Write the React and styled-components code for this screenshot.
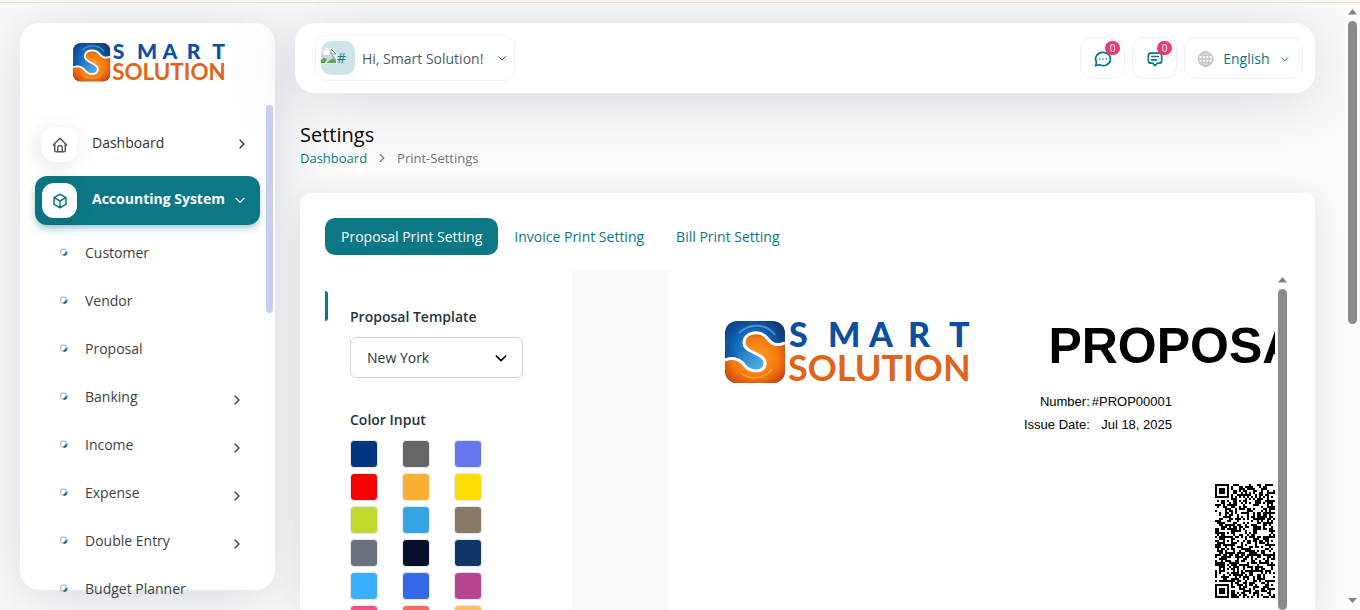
import React, { useState } from "react";
import styled, { createGlobalStyle, css } from "styled-components";

const teal = "#0c7785";
const barShadow = "0 6px 60px rgba(150, 154, 175, 0.36)";
const cardShadow = "0 6px 30px rgba(170, 180, 195, 0.36)";

const GlobalStyle = createGlobalStyle`
  *, *::before, *::after { box-sizing: border-box; }
  body {
    margin: 0;
    background: #fbfbfc;
    color: #293240;
    font: 14px/20px "Open Sans", "Noto Sans", sans-serif;
  }
  button, select, input { font: inherit; color: inherit; margin: 0; }
  a { color: inherit; text-decoration: none; }
`;

const Page = styled.div`
  display: flex;
  flex-direction: column;
  height: 100vh;
  overflow: hidden;
`;

const Notice = styled.div`
  flex: none;
  height: 3px;
  background: #fffaf0;
  border-bottom: 1px solid #f0dfc4;
`;

const Shell = styled.div`
  flex: 1;
  min-height: 0;
  display: flex;
`;

const Sidebar = styled.aside`
  flex: none;
  display: flex;
  flex-direction: column;
  width: 255px;
  margin: 20px 0 20px 20px;
  border-radius: 20px;
  background: #fff;
  box-shadow: ${barShadow};
`;

const Brand = styled.a`
  flex: none;
  display: flex;
  justify-content: center;
  padding: 20px 0 23px 4px;
`;

const LogoSvg = styled.svg`
  display: block;
  flex: none;
  align-self: flex-start;
  overflow: visible;
  width: ${(p) => p.$width}px;
  aspect-ratio: 246 / 62;
`;

const MenuScroll = styled.div`
  flex: 1;
  min-height: 0;
  display: flex;
  justify-content: space-between;
  padding: 0 2px 0 15px;
`;

const Thumb = styled.div`
  flex: none;
  width: ${(p) => (p.$menu ? 7 : 9)}px;
  height: ${(p) => p.$height || "auto"};
  border-radius: 5px;
  background: ${(p) => (p.$menu ? "#c8cfef" : "#8b8b8b")};
  ${(p) => p.$grow && css`flex: 1;`}
`;

const Menu = styled.ul`
  list-style: none;
  width: 225px;
  margin: 0;
  padding: 15px 0 0;
`;

const MenuLink = styled.a`
  display: flex;
  align-items: center;
  height: 49px;
  margin-bottom: ${(p) => (p.$active ? 4 : 7)}px;
  padding: 0 ${(p) => (p.$active ? 13 : 10)}px 0 7px;
  border-radius: 12px;
  color: ${(p) => (p.$active ? "#fff" : "#333")};
  font-weight: ${(p) => (p.$active ? 700 : 500)};
  ${(p) =>
    p.$active &&
    css`
      background: ${teal};
      box-shadow: 0 4px 7px -1px rgba(12, 119, 133, 0.4);
    `}
`;

const IconTile = styled.span`
  display: grid;
  place-items: center;
  width: 35px;
  height: 35px;
  padding-top: 2px;
  margin-right: 15px;
  border-radius: 12px;
  background: #fff;
  color: ${(p) => (p.$active ? teal : "#525b69")};
  box-shadow: -3px 4px 23px rgba(0, 0, 0, 0.1);
`;

const MenuText = styled.span`
  flex: 1;
  white-space: nowrap;
  padding-bottom: 3px;
`;

const SubLink = styled.a`
  display: flex;
  align-items: center;
  gap: 17px;
  height: 48px;
  padding: 0 15px 0 24px;
  color: #3c3f43;

  svg:last-child:not(:first-child) { position: relative; top: 3px; }
`;

const SubText = styled.span`
  flex: 1;
  white-space: nowrap;
`;

const Main = styled.main`
  flex: 1;
  min-width: 0;
  display: flex;
  flex-direction: column;
  padding: 20px 30px 0 20px;
`;

const TopBar = styled.header`
  flex: none;
  display: flex;
  align-items: center;
  gap: 7px;
  height: 70px;
  padding: 0 12px 0 20px;
  border-radius: 20px;
  background: #fff;
  box-shadow: ${barShadow};
`;

const BarButton = styled.button`
  position: relative;
  display: flex;
  align-items: center;
  justify-content: center;
  height: 42px;
  width: 45px;
  padding: 2px 0 0;
  border: 1px solid #f1f1f1;
  border-radius: 12px;
  background: #fff;
  color: ${teal};
  white-space: nowrap;
  ${(p) =>
    p.$user &&
    css`
      width: 200px;
      height: 46px;
      margin-right: auto;
      padding: 0 6px 0 5px;
      gap: 7px;
      color: #525b69;
    `}
  ${(p) =>
    p.$language &&
    css`
      width: 119px;
      gap: 9px;
      padding: 2px 12px 0;
    `}
`;

const BarText = styled.span`
  flex: 1;
  text-align: left;
  padding-top: ${(p) => (p.$user ? 2 : 0)}px;
`;

const Avatar = styled.span`
  display: flex;
  width: 34px;
  height: 34px;
  padding-top: 7px;
  border-radius: 10px;
  background: #cfe4e7;
  color: ${teal};
`;

const Badge = styled.span`
  position: absolute;
  top: 3px;
  right: 4px;
  width: 15px;
  height: 14px;
  border-radius: 7px;
  background: #f0386b;
  color: #fff;
  font-size: 10px;
  line-height: 14px;
`;

const Heading = styled.div`
  flex: none;
  padding: 30px 5px 0;
`;

const Title = styled.h1`
  margin: 0 0 1px;
  color: #060606;
  font-size: 20px;
  line-height: 24px;
  font-weight: 500;
`;

const Crumbs = styled.nav`
  display: flex;
  align-items: center;
  gap: 8px;
  font-size: 13px;
  color: #6c757d;

  a { color: ${teal}; }
`;

const Card = styled.section`
  flex: 1;
  min-height: 0;
  display: flex;
  flex-direction: column;
  margin: 25px 0 0 5px;
  padding: 25px 25px 0;
  border-radius: 10px 10px 0 0;
  background: #fff;
  box-shadow: ${cardShadow};
`;

const Tabs = styled.div`
  flex: none;
  display: flex;
`;

const Tab = styled.button`
  height: 37px;
  padding: 0 16px;
  border: 0;
  border-radius: 10px;
  background: ${(p) => (p.$active ? teal : "transparent")};
  color: ${(p) => (p.$active ? "#fff" : teal)};
`;

const Panel = styled.div`
  flex: 1;
  min-height: 0;
  display: flex;
  margin-top: 16px;
`;

const Form = styled.form`
  flex: none;
  width: 247px;
  padding-top: 20px;
  display: flex;
  gap: 22px;
`;

const Accent = styled.div`
  width: 3px;
  height: 30px;
  border-radius: 0 3px 3px 0;
  background: ${teal};
`;

const Fields = styled.div`
  width: 173px;
  padding-top: 16px;
`;

const Label = styled.label`
  display: block;
  margin-bottom: 10px;
  font-weight: 600;
`;

const SelectBox = styled.div`
  display: grid;
  align-items: center;
  margin-bottom: 32px;

  > * { grid-area: 1 / 1; }
  svg { justify-self: end; margin-right: 14px; pointer-events: none; color: #000; }
`;

const Select = styled.select`
  appearance: none;
  width: 100%;
  height: 41px;
  padding: 0 16px;
  border: 1px solid #ced4da;
  border-radius: 6px;
  background: #fff;
`;

const Swatches = styled.fieldset`
  display: grid;
  grid-template-columns: repeat(3, 28px);
  gap: 5px 24px;
  margin: 0;
  padding: 0;
  border: 0;

  legend { padding: 0 0 10px; font-weight: 600; }
`;

const Swatch = styled.input`
  appearance: none;
  width: 28px;
  height: 28px;
  border: 1px solid #e3e7ee;
  border-radius: 4px;
  background: ${(p) => p.$color};
`;

const Preview = styled.div`
  flex: 1;
  min-width: 0;
  display: flex;
  background: #f8f9fb;
`;

const Viewport = styled.div`
  flex: 1;
  min-width: 0;
  overflow: hidden;
  padding-left: 97px;
`;

const Sheet = styled.article`
  display: flex;
  justify-content: space-between;
  width: 716px;
  min-height: 100%;
  padding: 50px 56px;
  background: #fff;
  color: #000;
  font: 13px/23px "Liberation Sans", Arial, sans-serif;
`;

const Summary = styled.div`
  flex: none;
  display: flex;
  flex-direction: column;
  width: 305px;
`;

const DocTitle = styled.h2`
  margin: 0 0 18px;
  align-self: flex-end;
  font-size: 50px;
  line-height: 51px;
`;

const Meta = styled.table`
  align-self: flex-start;
  border-collapse: collapse;
  margin-bottom: 48px;
  text-align: right;

  th { padding: 0; font-weight: 400; }
  td { padding: 0 0 0 2px; }
`;

const Qr = styled.svg`
  align-self: flex-end;
  width: 114px;
  height: 114px;
`;

const ScrollTrack = styled.div`
  flex: none;
  display: flex;
  flex-direction: column;
  align-items: center;
  gap: 6px;
  width: 15px;
  padding: ${(p) => (p.$page ? "6px 0" : "6px 0 0")};
  background: ${(p) => (p.$page ? "#fcfcfc" : "#fff")};

  svg:last-child:not(:first-child) { margin-top: auto; }
`;

const Stroke = ({ size = 18, width = 2, children }) => (
  <svg width={size} height={size} viewBox="0 0 24 24" fill="none" stroke="currentColor"
    strokeWidth={width} strokeLinecap="round" strokeLinejoin="round" aria-hidden="true">
    {children}
  </svg>
);

const ChevronRight = ({ size = 16 }) => <Stroke size={size}><path d="M9 18l6-6-6-6" /></Stroke>;
const ChevronDown = ({ size = 14, width }) => <Stroke size={size} width={width}><path d="M5 9l7 7 7-7" /></Stroke>;

const HomeIcon = () => (
  <Stroke>
    <path d="M5 12H3l9-9 9 9h-2" />
    <path d="M5 12v7a2 2 0 0 0 2 2h10a2 2 0 0 0 2-2v-7" />
    <path d="M9 21v-6a2 2 0 0 1 2-2h2a2 2 0 0 1 2 2v6" />
  </Stroke>
);

const BoxIcon = () => (
  <Stroke>
    <path d="M12 3l8 4.500v9L12 21l-8-4.500v-9L12 3M12 12l8-4.500M12 12v9M12 12L4 7.500" />
  </Stroke>
);

const ChatIcon = () => (
  <Stroke size={20}>
    <path d="M3 20l1.300-3.900a9 8 0 1 1 3.400 2.900L3 20M12 12v.01M8 12v.01M16 12v.01" />
  </Stroke>
);

const MessageIcon = () => (
  <Stroke size={20}>
    <path d="M12 20l-3-3H7a3 3 0 0 1-3-3V8a3 3 0 0 1 3-3h10a3 3 0 0 1 3 3v6a3 3 0 0 1-3 3h-2l-3 3M8 9h8M8 13h6" />
  </Stroke>
);

const GlobeIcon = () => (
  <svg width="18" height="18" viewBox="0 0 18 18" fill="none" stroke="#c4c4c4" strokeWidth="1.500" aria-hidden="true">
    <circle cx="9" cy="9" r="7.500" />
    <ellipse cx="9" cy="9" rx="3.700" ry="7.500" />
    <path d="M9 1.500v15M1.500 9h15M3 5h12M3 13h12" />
  </svg>
);

const BulletIcon = () => (
  <svg width="9" height="9" viewBox="0 0 9 9" fill="none" aria-hidden="true">
    <circle cx="4.500" cy="4" r="3" stroke="#b9cbd2" strokeWidth="1.500" />
    <path d="M7.500 4a3 3 0 0 1-3 3" stroke="#1d7080" strokeWidth="2" />
  </svg>
);

const BrokenImage = () => (
  <svg width="16" height="16" viewBox="0 0 16 16" aria-hidden="true">
    <path d="M0 4l3-2 2-2h6l5 5v11H0z" fill="#fff" opacity="0.500" />
    <path d="M0 6h10l5 7H0z" fill="#c4d6f3" />
    <path d="M3 6a3 3 0 0 1 6-1l1 2H3z" fill="#fff" />
    <path d="M0 15v-3l3-2 3 1-2 4z" fill="#56a844" />
    <path d="M5 15l7-5 3 3v2z" fill="#56a844" />
    <path d="M10 1l5 5h-5zM11 7l4 5" fill="#fff" stroke="#8d8d8d" />
  </svg>
);

const Arrow = ({ down }) => (
  <svg width="9" height="6" viewBox="0 0 9 6" aria-hidden="true">
    <path d={down ? "M0 0h9L4.500 5z" : "M0 5.500h9L4.500 0z"} fill="#808080" />
  </svg>
);

const Logo = ({ width, id }) => (
  <LogoSvg $width={width} viewBox="0 0 246 62" role="img" aria-label="Smart Solution">
    <defs>
      <radialGradient id={`${id}-blue`} cx="0.45" cy="0.45" r="0.65">
        <stop offset="0" stopColor="#2b9be0" />
        <stop offset="0.500" stopColor="#0d62b4" />
        <stop offset="1" stopColor="#122f68" />
      </radialGradient>
      <radialGradient id={`${id}-orange`} cx="0.5" cy="0.5" r="0.7">
        <stop offset="0" stopColor="#ffa62b" />
        <stop offset="0.550" stopColor="#f5780f" />
        <stop offset="1" stopColor="#b93408" />
      </radialGradient>
      <linearGradient id={`${id}-drop`} x1="0" y1="0" x2="1" y2="1">
        <stop offset="0" stopColor="#1167bb" />
        <stop offset="1" stopColor="#5cbbe9" />
      </linearGradient>
      <clipPath id={`${id}-clip`}><rect width="60" height="62" rx="12" /></clipPath>
    </defs>
    <g clipPath={`url(#${id}-clip)`}>
      <path fill={`url(#${id}-blue)`} d="M0 0h60v62H0z" />
      <path fill={`url(#${id}-orange)`}
        d="M60 22C50 26 46 22 42 17C36 9 19 10 19 22C19 32 40 32 40 42C40 53 25 51 20 45C15 38 8 36 0 39V62H60z" />
      <path fill={`url(#${id}-drop)`} d="M19 23C21 33 40 32 40 42C40 53 25 51 20 45L12 33z" />
      <path d="M50 14C42 3 25 1 14 12" fill="none" stroke="#8fc5ee" strokeWidth="2" opacity="0.500" />
      <path d="M47 48C39 59 25 59 16 52" fill="none" stroke="#ffb03e" strokeWidth="2" opacity="0.600" />
      <path d="M60 22C50 26 46 22 42 17C36 9 19 10 19 22C19 32 40 32 40 42C40 53 25 51 20 45C15 38 8 36 0 39"
        fill="none" stroke="#fff" strokeWidth="3" />
    </g>
    <g fontFamily="Lato, sans-serif" fontWeight="900" fontSize="34">
      <text y="26" x="64 103 144 183 224" fill="#0b4ea2">SMART</text>
      <text y="60" x="63" fontWeight="700" fontSize="36" fill="#e0651b">SOLUTION</text>
    </g>
  </LogoSvg>
);

const QR_SIZE = 57;

function qrPath() {
  let seed = 20250718;
  let path = "";
  const inFinder = (x, y) => (x < 8 && y < 8) || (x > 48 && y < 8) || (x < 8 && y > 48);
  const ring = (x, y, cx, cy) => Math.max(Math.abs(x - cx), Math.abs(y - cy));
  for (let y = 0; y < QR_SIZE; y++) {
    for (let x = 0; x < QR_SIZE; x++) {
      seed = (Math.imul(seed, 1664525) + 1013904223) >>> 0;
      let on = seed >>> 28 > 7;
      if (inFinder(x, y)) {
        const r = ring(x, y, x > 48 ? 53 : 3, y > 48 ? 53 : 3);
        on = r < 2 || r === 3;
      } else {
        const r = Math.min(ring(x, y, 28, 28), ring(x, y, 6, 28), ring(x, y, 28, 6), ring(x, y, 28, 50));
        if (r < 3) on = r !== 1;
        else if (x === 6 || y === 6) on = (x + y) % 2 === 0;
      }
      if (on) path += `M${x} ${y}h1v1h-1z`;
    }
  }
  return path;
}

const QR_PATH = qrPath();

const subItems = [
  ["Customer"], ["Vendor"], ["Proposal"], ["Banking", true], ["Income", true],
  ["Expense", true], ["Double Entry", true], ["Budget Planner"],
];

const colors = [
  "#003580", "#666666", "#6676ef", "#f50102", "#f9b034", "#fbdd03",
  "#c1d82f", "#37a4e4", "#8a7966", "#6a737b", "#050f2c", "#0e3666",
  "#3baeff", "#3368e6", "#b84592", "#f64f81", "#f66c5f", "#fac168",
];

const tabs = ["Proposal Print Setting", "Invoice Print Setting", "Bill Print Setting"];

export default function App() {
  const [tab, setTab] = useState(0);
  return (
    <Page>
      <GlobalStyle />
      <Notice />
      <Shell>
        <Sidebar>
          <Brand href="#"><Logo width={153} id="brand" /></Brand>
          <MenuScroll>
            <Menu>
              <li>
                <MenuLink href="#">
                  <IconTile><HomeIcon /></IconTile>
                  <MenuText>Dashboard</MenuText>
                  <ChevronRight />
                </MenuLink>
              </li>
              <li>
                <MenuLink href="#" $active>
                  <IconTile $active><BoxIcon /></IconTile>
                  <MenuText>Accounting System</MenuText>
                  <ChevronDown />
                </MenuLink>
              </li>
              {subItems.map(([name, nested]) => (
                <li key={name}>
                  <SubLink href="#">
                    <BulletIcon />
                    <SubText>{name}</SubText>
                    {nested && <ChevronRight />}
                  </SubLink>
                </li>
              ))}
            </Menu>
            <Thumb $menu $height="208px" />
          </MenuScroll>
        </Sidebar>

        <Main>
          <TopBar>
            <BarButton type="button" $user>
              <Avatar><BrokenImage />#</Avatar>
              <BarText $user>Hi, Smart Solution!</BarText>
              <ChevronDown size={12} />
            </BarButton>
            <BarButton type="button" aria-label="Chats"><ChatIcon /><Badge>0</Badge></BarButton>
            <BarButton type="button" aria-label="Messages"><MessageIcon /><Badge>0</Badge></BarButton>
            <BarButton type="button" $language>
              <GlobeIcon />
              <BarText>English</BarText>
              <ChevronDown size={12} />
            </BarButton>
          </TopBar>

          <Heading>
            <Title>Settings</Title>
            <Crumbs aria-label="Breadcrumb">
              <a href="#">Dashboard</a>
              <ChevronRight size={14} />
              <span>Print-Settings</span>
            </Crumbs>
          </Heading>

          <Card>
            <Tabs role="tablist">
              {tabs.map((name, i) => (
                <Tab key={name} type="button" role="tab" aria-selected={tab === i} $active={tab === i} onClick={() => setTab(i)}>
                  {name}
                </Tab>
              ))}
            </Tabs>
            <Panel>
              <Form>
                <Accent />
                <Fields>
                  <Label htmlFor="template">Proposal Template</Label>
                  <SelectBox>
                    <Select id="template"><option>New York</option></Select>
                    <ChevronDown size={16} width={2.5} />
                  </SelectBox>
                  <Swatches>
                    <legend>Color Input</legend>
                    {colors.map((c) => (
                      <Swatch key={c} type="radio" name="color" value={c} aria-label={c} $color={c} />
                    ))}
                  </Swatches>
                </Fields>
              </Form>
              <Preview>
                <Viewport>
                  <Sheet>
                    <Logo width={246} id="sheet" />
                    <Summary>
                      <DocTitle>PROPOSAL</DocTitle>
                      <Meta>
                        <tbody>
                          <tr><th scope="row">Number:</th><td>#PROP00001</td></tr>
                          <tr><th scope="row">Issue Date:</th><td>Jul 18, 2025</td></tr>
                        </tbody>
                      </Meta>
                      <Qr viewBox="0 0 57 57" shapeRendering="crispEdges" role="img" aria-label="QR code">
                        <path d={QR_PATH} />
                      </Qr>
                    </Summary>
                  </Sheet>
                </Viewport>
                <ScrollTrack><Arrow /><Thumb $grow /></ScrollTrack>
              </Preview>
            </Panel>
          </Card>
        </Main>
        <ScrollTrack $page><Arrow /><Thumb $height="51%" /><Arrow down /></ScrollTrack>
      </Shell>
    </Page>
  );
}
